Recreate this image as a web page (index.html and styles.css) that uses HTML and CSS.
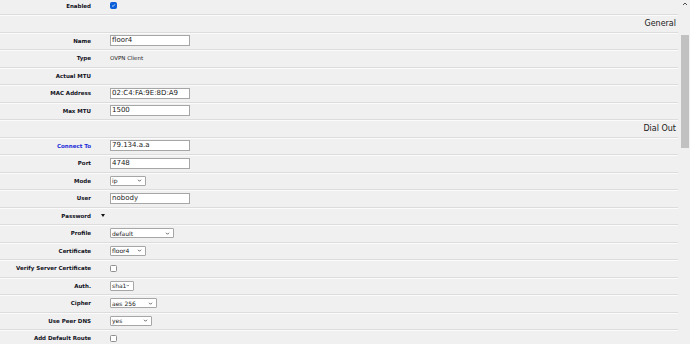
FILE: index.html
```html
<!DOCTYPE html>
<html lang="en">
<head>
    <meta charset="UTF-8">
    <title>Interface - floor4</title>
    <link rel="stylesheet" href="styles.css">
</head>
<body>
    <div class="page">
        <form class="form">
            <div class="row">
                <span class="label">Enabled</span><span class="mark"></span>
                <div class="value"><span class="check checked"><svg viewBox="0 0 8 8" width="7" height="7"><path d="M1.8 4.2 L3.3 5.6 L6.2 2.2" fill="none" stroke="#fff" stroke-width="1.2"/></svg></span></div>
            </div>
            <div class="row section"><h2>General</h2></div>
            <div class="row">
                <span class="label">Name</span><span class="mark"></span>
                <div class="value"><span class="text">floor4</span></div>
            </div>
            <div class="row">
                <span class="label">Type</span><span class="mark"></span>
                <div class="value"><span class="plain">OVPN Client</span></div>
            </div>
            <div class="row">
                <span class="label">Actual MTU</span><span class="mark"></span>
                <div class="value"></div>
            </div>
            <div class="row">
                <span class="label">MAC Address</span><span class="mark"></span>
                <div class="value"><span class="text">02:C4:FA:9E:8D:A9</span></div>
            </div>
            <div class="row">
                <span class="label">Max MTU</span><span class="mark"></span>
                <div class="value"><span class="text">1500</span></div>
            </div>
            <div class="row section"><h2>Dial Out</h2></div>
            <div class="row">
                <span class="label link">Connect To</span><span class="mark"></span>
                <div class="value"><span class="text">79.134.a.a</span></div>
            </div>
            <div class="row">
                <span class="label">Port</span><span class="mark"></span>
                <div class="value"><span class="text">4748</span></div>
            </div>
            <div class="row">
                <span class="label">Mode</span><span class="mark"></span>
                <div class="value"><span class="select w36">ip<svg viewBox="0 0 6 4" width="5" height="3"><path d="M1 1 L3 3 L5 1" fill="none" stroke="#333" stroke-width="1"/></svg></span></div>
            </div>
            <div class="row">
                <span class="label">User</span><span class="mark"></span>
                <div class="value"><span class="text">nobody</span></div>
            </div>
            <div class="row">
                <span class="label">Password</span><span class="mark"><span class="toggle"></span></span>
                <div class="value"></div>
            </div>
            <div class="row">
                <span class="label">Profile</span><span class="mark"></span>
                <div class="value"><span class="select w64">default<svg viewBox="0 0 6 4" width="5" height="3"><path d="M1 1 L3 3 L5 1" fill="none" stroke="#333" stroke-width="1"/></svg></span></div>
            </div>
            <div class="row">
                <span class="label">Certificate</span><span class="mark"></span>
                <div class="value"><span class="select w36">floor4<svg viewBox="0 0 6 4" width="5" height="3"><path d="M1 1 L3 3 L5 1" fill="none" stroke="#333" stroke-width="1"/></svg></span></div>
            </div>
            <div class="row">
                <span class="label">Verify Server Certificate</span><span class="mark"></span>
                <div class="value"><span class="check"></span></div>
            </div>
            <div class="row">
                <span class="label">Auth.</span><span class="mark"></span>
                <div class="value"><span class="select w24">sha1<svg viewBox="0 0 6 4" width="5" height="3"><path d="M1 1 L3 3 L5 1" fill="none" stroke="#333" stroke-width="1"/></svg></span></div>
            </div>
            <div class="row">
                <span class="label">Cipher</span><span class="mark"></span>
                <div class="value"><span class="select w47">aes 256<svg viewBox="0 0 6 4" width="5" height="3"><path d="M1 1 L3 3 L5 1" fill="none" stroke="#333" stroke-width="1"/></svg></span></div>
            </div>
            <div class="row">
                <span class="label">Use Peer DNS</span><span class="mark"></span>
                <div class="value"><span class="select w42">yes<svg viewBox="0 0 6 4" width="5" height="3"><path d="M1 1 L3 3 L5 1" fill="none" stroke="#333" stroke-width="1"/></svg></span></div>
            </div>
            <div class="row">
                <span class="label">Add Default Route</span><span class="mark"></span>
                <div class="value"><span class="check"></span></div>
            </div>
        </form>
        <div class="scrollbar">
            <svg class="arrow" viewBox="0 0 6 4" width="6" height="4"><path d="M1 3 L3 1 L5 3" fill="none" stroke="#505050" stroke-width="1"/></svg>
            <div class="thumb"></div>
        </div>
    </div>
</body>
</html>
```
FILE: styles.css
```css
* {
    box-sizing: border-box;
    margin: 0;
    padding: 0;
}

body {
    background-color: #f0f0f0;
    font-family: 'DejaVu Sans', Verdana, sans-serif;
    color: #222;
    overflow: hidden;
}

.page {
    display: flex;
    gap: 2px;
    height: 344px;
}

.form {
    width: 678px;
    margin-top: -2.5px;
}

.row {
    display: grid;
    grid-template-columns: 91px 19px 1fr;
    align-items: center;
    height: 17.5px;
    border-bottom: 1px solid #dcdcdc;
    box-shadow: 0 1px 0 #fbfbfb;
}

.label {
    text-align: right;
    font-size: 5.5px;
    font-weight: bold;
    color: #111122;
    white-space: nowrap;
}

.label.link {
    color: #1a2ad8;
}

.mark {
    display: flex;
    align-items: center;
    padding-left: 10px;
}

.toggle {
    width: 0;
    height: 0;
    border-left: 2px solid transparent;
    border-right: 2px solid transparent;
    border-top: 3px solid #111;
}

.value {
    display: flex;
    align-items: center;
    font-size: 5.5px;
}

.section {
    display: flex;
    justify-content: flex-end;
}

.section h2 {
    font-size: 8px;
    font-weight: normal;
    padding-right: 2px;
    color: #1a1a1a;
}

.text {
    width: 80px;
    height: 11px;
    line-height: 9px;
    padding-left: 1px;
    font-size: 7px;
    background-color: #fff;
    border: 1px solid #a6a6a6;
    color: #1a1a1a;
}

.plain {
    color: #222;
}

.select {
    display: flex;
    align-items: center;
    justify-content: space-between;
    height: 10px;
    padding: 0 3px 0 1px;
    font-size: 6px;
    background-color: #fff;
    border: 1px solid #a6a6a6;
    border-radius: 1px;
    color: #1a1a1a;
}

.w24 { width: 24px; }
.w36 { width: 36px; }
.w42 { width: 42px; }
.w47 { width: 47px; }
.w64 { width: 64px; }

.check {
    display: flex;
    align-items: center;
    justify-content: center;
    width: 7px;
    height: 7px;
    background-color: #fff;
    border: 1px solid #8f8f8f;
    border-radius: 1.5px;
}

.check.checked {
    background-color: #0b5fd9;
    border-color: #0b5fd9;
}

.scrollbar {
    display: flex;
    flex-direction: column;
    align-items: center;
    width: 10px;
    padding-top: 2px;
}

.arrow {
    margin-bottom: 29px;
}

.thumb {
    width: 8px;
    height: 113px;
    background-color: #c1c1c1;
}
```
